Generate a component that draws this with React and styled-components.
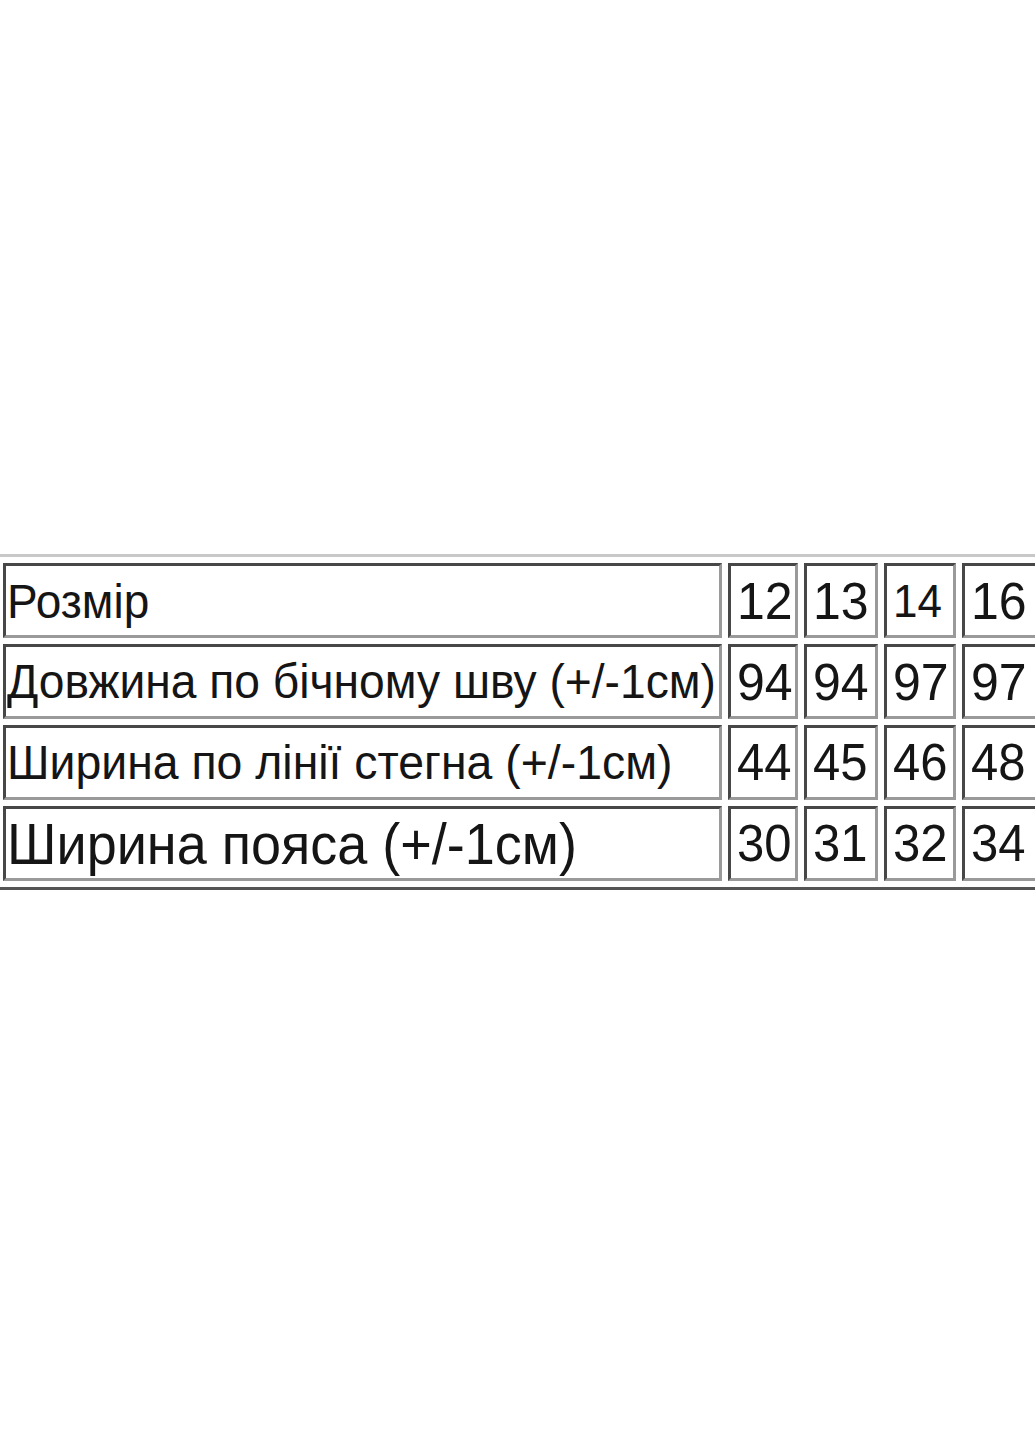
import styled, { createGlobalStyle } from "styled-components";

const GlobalStyle = createGlobalStyle`
  html, body {
    margin: 0;
    padding: 0;
    background: #fff;
    overflow-x: hidden;
  }
  body {
    width: 1035px;
    height: 1440px;
    overflow: hidden;
  }
`;

const Page = styled.div`
  width: 1035px;
  height: 1440px;
  padding-top: 554px;
  box-sizing: border-box;
  overflow: hidden;
`;

const SizeTable = styled.table`
  width: 1055px;
  margin-left: -6px;
  table-layout: fixed;
  border-collapse: separate;
  border-spacing: 6px;
  border-style: solid;
  border-width: 3px;
  border-color: #c8c8c8 #555 #555 #c8c8c8;
  font-family: "Liberation Sans", Arial, sans-serif;
  color: #151515;
`;

const Cell = styled.td`
  width: ${(p) => p.$w}px;
  height: 75px;
  padding: 0 0 0 ${(p) => (p.$label ? 1 : 6)}px;
  box-sizing: border-box;
  border-style: solid;
  border-width: 3px;
  border-color: #474747 #9a9a9a #9a9a9a #474747;
  font-size: ${(p) => p.$size}px;
  line-height: 1;
  white-space: nowrap;
  vertical-align: middle;
  overflow: hidden;
`;

const Text = styled.span`
  display: inline-block;
  transform: scaleY(1.05);
  transform-origin: center;
`;

const widths = [719, 70, 74, 72, 78];

const rows = [
  { label: "Розмір", size: 46, values: ["12", "13", "14", "16"], sizes: [50, 50, 44, 50] },
  { label: "Довжина по бічному шву (+/-1см)", size: 46.2, values: ["94", "94", "97", "97"], sizes: [50, 50, 50, 50] },
  { label: "Ширина по лінії стегна (+/-1см)", size: 46.4, values: ["44", "45", "46", "48"], sizes: [49, 49, 49, 49] },
  { label: "Ширина пояса (+/-1см)", size: 54, values: ["30", "31", "32", "34"], sizes: [49, 49, 49, 49] },
];

export default function App() {
  return (
    <Page>
      <GlobalStyle />
      <SizeTable>
        <tbody>
          {rows.map((row) => (
            <tr key={row.label}>
              <Cell $label $w={widths[0]} $size={row.size}>
                <Text>{row.label}</Text>
              </Cell>
              {row.values.map((v, i) => (
                <Cell key={i} $w={widths[i + 1]} $size={row.sizes[i]}>
                  <Text>{v}</Text>
                </Cell>
              ))}
            </tr>
          ))}
        </tbody>
      </SizeTable>
    </Page>
  );
}
